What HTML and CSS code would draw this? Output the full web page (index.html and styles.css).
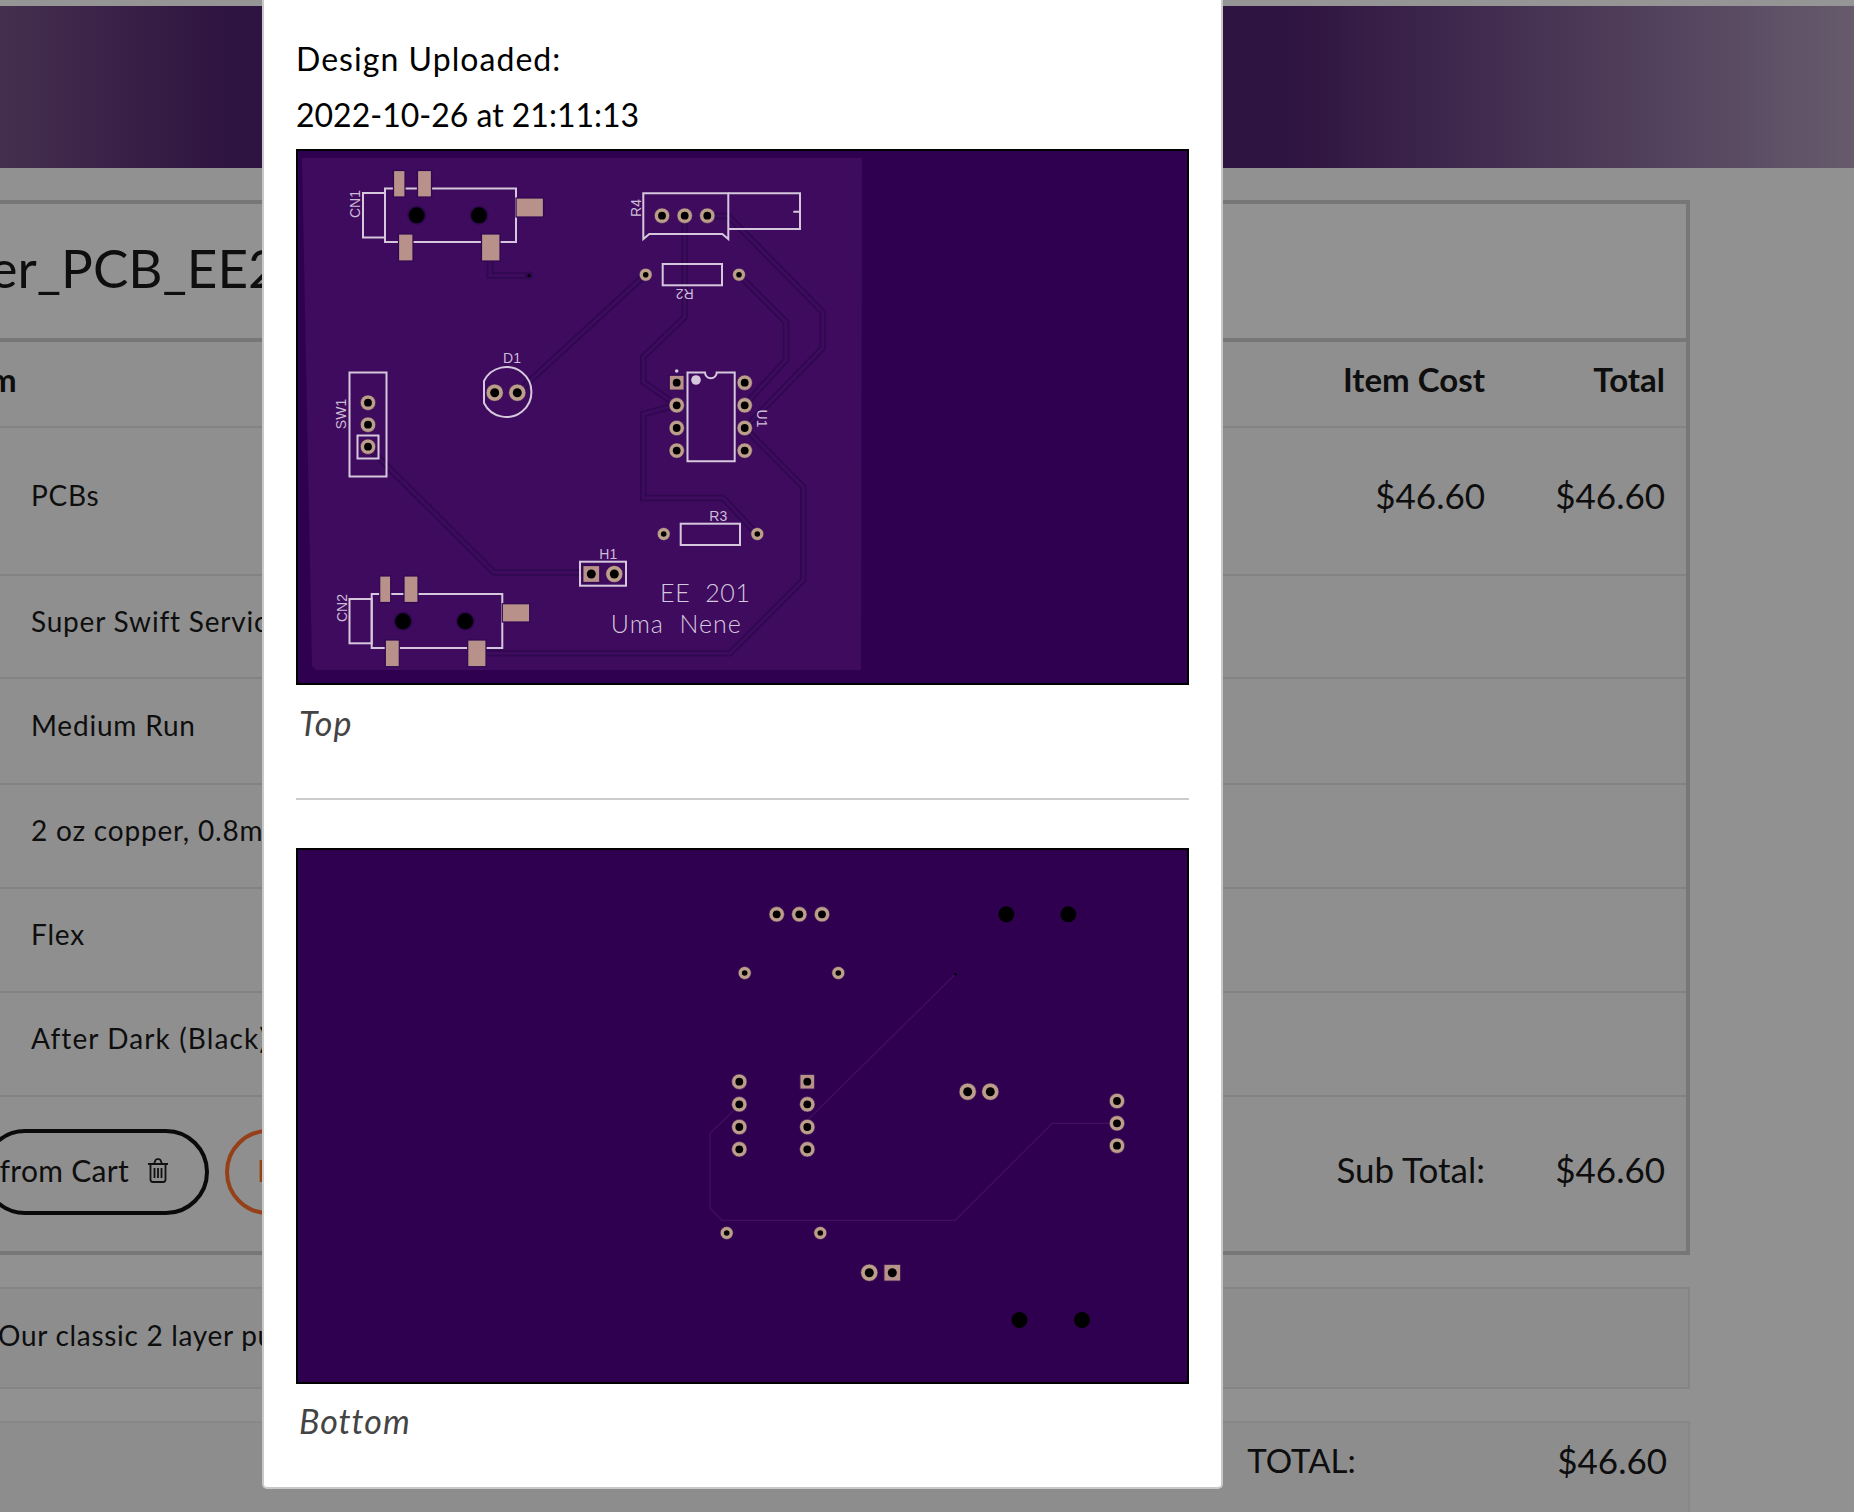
FILE: index.html
```html
<!DOCTYPE html>
<html lang="en">
<head>
<meta charset="utf-8">
<title>Cart</title>
<link rel="stylesheet" href="styles.css">
</head>
<body>
<div class="page">
  <div class="top-gap"></div>
  <header class="band"></header>
  <main class="content">
    <section class="cart">
      <h1 class="cart-title">Timer_PCB_EE201</h1>
      <div class="row row-head">
        <div class="cell-name">Item</div>
        <div class="cell-cost">Item Cost</div>
        <div class="cell-total">Total</div>
      </div>
      <div class="row row-main">
        <div class="cell-name">PCBs</div>
        <div class="cell-cost price">$46.60</div>
        <div class="cell-total price">$46.60</div>
      </div>
      <div class="row row-swift"><div class="cell-name">Super Swift Service</div></div>
      <div class="row row-run"><div class="cell-name">Medium Run</div></div>
      <div class="row"><div class="cell-name">2 oz copper, 0.8mm</div></div>
      <div class="row"><div class="cell-name">Flex</div></div>
      <div class="row row-dark"><div class="cell-name">After Dark (Black)</div></div>
      <div class="row row-foot">
        <div class="actions">
          <button class="btn btn-remove">Remove from Cart
            <svg class="trash" viewBox="0 0 22 25" aria-hidden="true">
              <path d="M1 6h20M3.500 6v15.500a2.500 2.500 0 0 0 2.500 2.500h10a2.500 2.500 0 0 0 2.500-2.500V6M7 6l1.500-3.800a1.800 1.800 0 0 1 1.600-1h1.800a1.800 1.800 0 0 1 1.600 1L15 6M7.500 10v10M11 10v10M14.500 10v10"/>
            </svg>
          </button>
          <button class="btn btn-edit">Edit</button>
        </div>
        <div class="cell-cost price">Sub Total:</div>
        <div class="cell-total price">$46.60</div>
      </div>
    </section>
    <section class="desc">Our classic 2 layer purple PCBs, with ENIG finish</section>
    <section class="grand">
      <div class="grand-label">TOTAL:</div>
      <div class="grand-value">$46.60</div>
    </section>
  </main>
</div>

<aside class="modal">
  <p class="modal-line modal-heading">Design Uploaded:</p>
  <p class="modal-line">2022-10-26 at 21:11:13</p>
  <figure class="fig fig-top">
    <svg class="board" viewBox="298 151 889 532" xmlns="http://www.w3.org/2000/svg">
      <defs>
        <g id="p7"><circle r="7.700" class="pad"/><circle r="3.900" class="hole"/></g>
        <g id="p6"><circle r="6.500" class="pad"/><circle r="2.800" class="hole"/></g>
        <g id="p8"><circle r="8.600" class="pad"/><circle r="4.500" class="hole"/></g>
        <g id="s7"><rect x="-7.500" y="-7.500" width="15" height="15" class="pad-sq"/><circle r="3.900" class="hole"/></g>
        <g id="s8"><rect x="-8.500" y="-8.500" width="17" height="17" class="pad-sq"/><circle r="4.500" class="hole"/></g>
        <g id="mt"><circle r="9.500" class="halo"/><circle r="8" class="hole"/></g>
        <path id="tr" d="M520 390L645 275M684.700 216V317L643.300 357V382L676.700 405M707 216H728L822.700 312V348L745 428M739 275L786 322V360L744.700 405M676.700 405L643.300 414V498H723L757 534M744.700 428L803.300 487V580L730 653.300H486M368 447L494 572.500H590M490 260V275.500H529"/>
      </defs>
      <rect x="298" y="151" width="889" height="532" class="mask"/>
      <path d="M302 158H862L861 670H316L312 666Z" class="copper"/>
      <use href="#tr" class="trace-edge"/>
      <use href="#tr" class="trace-core"/>
      <circle cx="529" cy="275.500" r="4" class="halo"/><circle cx="529" cy="275.500" r="1.500" class="hole"/>

      <rect x="385" y="188.500" width="131" height="53.500" class="silk"/>
      <rect x="363" y="193" width="22" height="44.500" class="silk"/>
      <rect x="393.500" y="170.500" width="11.500" height="26.500" class="pad-sq"/>
      <rect x="417.500" y="170.500" width="14" height="26.500" class="pad-sq"/>
      <rect x="516" y="198" width="27.500" height="19" class="pad-sq"/>
      <rect x="398.500" y="234" width="14.500" height="27" class="pad-sq"/>
      <rect x="481.500" y="234" width="18.500" height="27" class="pad-sq"/>
      <use href="#mt" x="416.700" y="215.300"/><use href="#mt" x="479" y="215.300"/>
      <text class="lbl" transform="translate(360 204) rotate(-90)">CN1</text>

      <path d="M643.300 239V193.300H728.300V239L722.300 234H649.300Z" class="silk"/>
      <path d="M728.300 193.300H800V229H728.300M793.300 211.700H800" class="silk"/>
      <use href="#p7" x="662" y="215.700"/><use href="#p7" x="684.700" y="215.700"/><use href="#p7" x="707.300" y="215.700"/>
      <text class="lbl" transform="translate(641 208) rotate(-90)">R4</text>

      <rect x="662.700" y="264" width="59.300" height="21.300" class="silk"/>
      <use href="#p6" x="645.700" y="274.700"/><use href="#p6" x="739" y="274.700"/>
      <text class="lbl" transform="translate(684.700 288.500) rotate(180)">R2</text>

      <path d="M484 381A25 25 0 1 1 484 403Z" class="silk"/>
      <use href="#p8" x="494.700" y="392.700"/><use href="#p8" x="517.300" y="392.700"/>
      <text class="lbl" x="512" y="363">D1</text>

      <rect x="349.500" y="372.500" width="37" height="104" class="silk"/>
      <rect x="357.500" y="435.500" width="21" height="23" class="silk"/>
      <use href="#p7" x="368" y="402.700"/><use href="#p7" x="368" y="424.700"/><use href="#p7" x="368" y="446.700"/>
      <text class="lbl" transform="translate(346 414) rotate(-90)">SW1</text>

      <path d="M687.500 372.500H705A5.800 5.800 0 0 0 716.700 372.500H734.700V461.300H687.500Z" class="silk"/>
      <circle cx="696" cy="380" r="4.800" class="silk-fill"/><circle cx="676.700" cy="371" r="1.800" class="silk-fill"/>
      <use href="#s7" x="676.700" y="382.700"/><use href="#p7" x="676.700" y="405.300"/><use href="#p7" x="676.700" y="428"/><use href="#p7" x="676.700" y="450.600"/>
      <use href="#p7" x="744.700" y="382.700"/><use href="#p7" x="744.700" y="405.300"/><use href="#p7" x="744.700" y="428"/><use href="#p7" x="744.700" y="450.600"/>
      <text class="lbl" transform="translate(757 418.500) rotate(90)">U1</text>

      <rect x="680.700" y="523.700" width="59.300" height="21.300" class="silk"/>
      <use href="#p6" x="663.700" y="534"/><use href="#p6" x="757.300" y="534"/>
      <text class="lbl" x="718.300" y="521">R3</text>

      <rect x="580" y="561.700" width="46" height="24" class="silk"/>
      <use href="#s8" x="591.300" y="574"/><use href="#p8" x="614.300" y="574"/>
      <text class="lbl" x="608.300" y="559">H1</text>

      <rect x="371.700" y="594" width="130.600" height="54" class="silk"/>
      <rect x="349.500" y="599" width="22.200" height="44.300" class="silk"/>
      <rect x="379.700" y="576" width="11" height="26.500" class="pad-sq"/>
      <rect x="404" y="576" width="14" height="26.500" class="pad-sq"/>
      <rect x="385.300" y="640" width="14" height="26.700" class="pad-sq"/>
      <rect x="467.700" y="640" width="18.300" height="26.700" class="pad-sq"/>
      <rect x="502.300" y="603.700" width="27.400" height="18.300" class="pad-sq"/>
      <use href="#mt" x="403" y="621.300"/><use href="#mt" x="465.300" y="621.300"/>
      <text class="lbl" transform="translate(347 608) rotate(-90)">CN2</text>

      <text class="etch" x="705" y="601.700" textLength="90" lengthAdjust="spacing" xml:space="preserve">EE  201</text>
      <text class="etch" x="675.800" y="633.300" textLength="130" lengthAdjust="spacing" xml:space="preserve">Uma  Nene</text>
    </svg>
    <figcaption class="caption">Top</figcaption>
  </figure>
  <hr class="rule">
  <figure class="fig">
    <svg class="board board-low" viewBox="298 850 889 532" xmlns="http://www.w3.org/2000/svg">
      <rect x="298" y="850" width="889" height="532" class="mask"/>
      <path d="M955.300 974.300L808.300 1119.300M733.300 1111L710 1133.300V1208.300L721.700 1220.300H955.300L1052.300 1123.300H1110" class="trace-thin"/>
      <circle cx="955.300" cy="974.300" r="1.300" class="hole"/>
      <use href="#p7" x="776.700" y="914.300"/><use href="#p7" x="799.300" y="914.300"/><use href="#p7" x="822" y="914.300"/>
      <circle cx="1006.300" cy="914.300" r="8" class="hole"/><circle cx="1068.300" cy="914.300" r="8" class="hole"/>
      <use href="#p6" x="744.700" y="973"/><use href="#p6" x="838.300" y="973"/>
      <use href="#p7" x="739.300" y="1081.700"/><use href="#p7" x="739.300" y="1104.300"/><use href="#p7" x="739.300" y="1127"/><use href="#p7" x="739.300" y="1149.300"/>
      <use href="#s7" x="807.300" y="1081.700"/><use href="#p7" x="807.300" y="1104.300"/><use href="#p7" x="807.300" y="1127"/><use href="#p7" x="807.300" y="1149.300"/>
      <use href="#p8" x="967.700" y="1091.700"/><use href="#p8" x="990.300" y="1091.700"/>
      <use href="#p7" x="1117" y="1101"/><use href="#p7" x="1117" y="1123.300"/><use href="#p7" x="1117" y="1145.700"/>
      <use href="#p6" x="726.700" y="1233"/><use href="#p6" x="820.300" y="1233"/>
      <use href="#p8" x="869.300" y="1272.700"/><use href="#s8" x="892.300" y="1272.700"/>
      <circle cx="1019.500" cy="1320" r="8" class="hole"/><circle cx="1082" cy="1320" r="8" class="hole"/>
    </svg>
    <figcaption class="caption">Bottom</figcaption>
  </figure>
</aside>
</body>
</html>
```

FILE: styles.css
```css
* { box-sizing: border-box; }
html, body { margin: 0; height: 1512px; overflow: hidden; }
body {
  background: #919191;
  color: #0e0e0e;
  font-family: Lato, "Open Sans", sans-serif;
  font-size: 28px;
  position: relative;
}
.page { width: 1854px; height: 1512px; overflow: hidden; }
.top-gap { height: 6px; background: #959595; }
.band {
  height: 162px;
  background: linear-gradient(90deg, #45304f 0, #2e1440 225px, #2e1440 1290px, #665a6c 100%);
}
.content { padding-top: 32px; margin-left: -100px; width: 1790px; }
.cart { border: 4px solid #777; background: #8f8f8f; height: 1055px; }
.cart-title {
  margin: 0;
  height: 138px;
  padding-top: 34px;
  text-indent: -2px;
  font-size: 53px;
  line-height: 60px;
  font-weight: 400;
  background: #929292;
  border-bottom: 4px solid #777;
  white-space: nowrap;
  overflow: hidden;
}
.row {
  display: flex;
  align-items: center;
  height: 104px;
  padding: 0 21px 13px 127px;
  border-bottom: 2px solid #838383;
}
.row-head { height: 86px; padding-left: 46px; padding-bottom: 10px; font-weight: 700; font-size: 33px; }
.row-main { height: 148px; padding-bottom: 12px; }
.row-swift { height: 103px; padding-bottom: 12px; }
.row-run { height: 106px; }
.row-foot { height: 154px; border-bottom: 0; padding: 0 21px 4px 0; }
.cell-name { flex: 1; white-space: nowrap; letter-spacing: .8px; }
.row-head .cell-name { letter-spacing: 0; }
.row-dark .cell-name { letter-spacing: 1.100px; }
.cell-cost { width: 300px; text-align: right; white-space: nowrap; }
.cell-total { width: 180px; text-align: right; }
.price { font-size: 35px; }
.row-foot .price { margin-bottom: 7px; }
.actions { flex: 1; display: flex; align-items: center; }
.btn {
  height: 86px;
  border-radius: 43px;
  background: transparent;
  font-family: inherit;
  font-size: 30px;
  letter-spacing: .3px;
  color: #0e0e0e;
  border: 4px solid #0a0a0a;
  display: flex;
  align-items: center;
  white-space: nowrap;
  flex: none;
}
.btn-remove { width: 227px; margin-left: 78px; padding: 0 36px 4px 0; justify-content: flex-end; overflow: hidden; }
.btn-edit { border-color: #96401a; color: #96401a; margin-left: 16px; padding: 0 40px 4px 28px; }
.trash { width: 22px; height: 25px; margin-left: 18px; flex: none; }
.trash path { fill: none; stroke: #111; stroke-width: 1.800; }
.desc {
  margin-top: 32px;
  height: 102px;
  border: 2px solid #858585;
  background: #8d8d8d;
  padding: 29px 0 0 96px;
  letter-spacing: .7px;
  white-space: nowrap;
}
.grand {
  margin-top: 32px;
  height: 200px;
  border: 2px solid #888;
  background: #8d8d8d;
  display: flex;
  padding: 17px 21px 0 0;
  justify-content: flex-end;
  font-size: 33px;
  align-items: flex-start;
}
.grand-label { width: 310px; }
.grand-value { text-align: right; font-size: 35px; line-height: 40px; }

.modal {
  position: absolute;
  left: 262px;
  top: 0;
  width: 961px;
  height: 1489px;
  padding: 31px 32px 0;
  background: #fff;
  border: 2px solid #c8c8c8;
  border-top: 0;
  border-radius: 0 0 5px 5px;
  font-size: 32px;
}
.modal-line { margin: 0; line-height: 56px; color: #000; }
.modal-heading { letter-spacing: 1.050px; }
.fig { margin: 0; }
.fig-top { margin-top: 6px; }
.board { display: block; width: 893px; height: 536px; border: 2px solid #000; }
.board-low { margin-bottom: -1px; }
.caption { padding-left: 3px; line-height: 55px; margin-top: 10px; font-style: italic; font-size: 34px; letter-spacing: 1px; color: #444; }
.rule { margin: 48px 0 48px; border: 0; border-top: 2px solid #ccc; }

.mask { fill: #300050; }
.copper { fill: #3e0b5e; }
.trace-edge { fill: none; stroke: #300850; stroke-width: 6.500; }
.trace-core { fill: none; stroke: #3e0b5e; stroke-width: 3; }
.trace-thin { fill: none; stroke: #40105f; stroke-width: 1.300; }
.pad { fill: #bd9e8a; stroke: #2f0850; stroke-width: .6; }
.pad-sq { fill: #b8918a; stroke: #2f0850; stroke-width: 1.200; }
.hole { fill: #000; }
.halo { fill: #2f0850; }
.silk { fill: none; stroke: #d6c8dc; stroke-width: 2; }
.silk-fill { fill: #d6c8dc; }
.lbl { fill: #cdbcd8; font-family: "Liberation Sans", sans-serif; font-size: 14px; text-anchor: middle; }
.etch { fill: #d6c8dc; font-family: Lato, sans-serif; font-size: 25px; font-weight: 300; text-anchor: middle; }
```
